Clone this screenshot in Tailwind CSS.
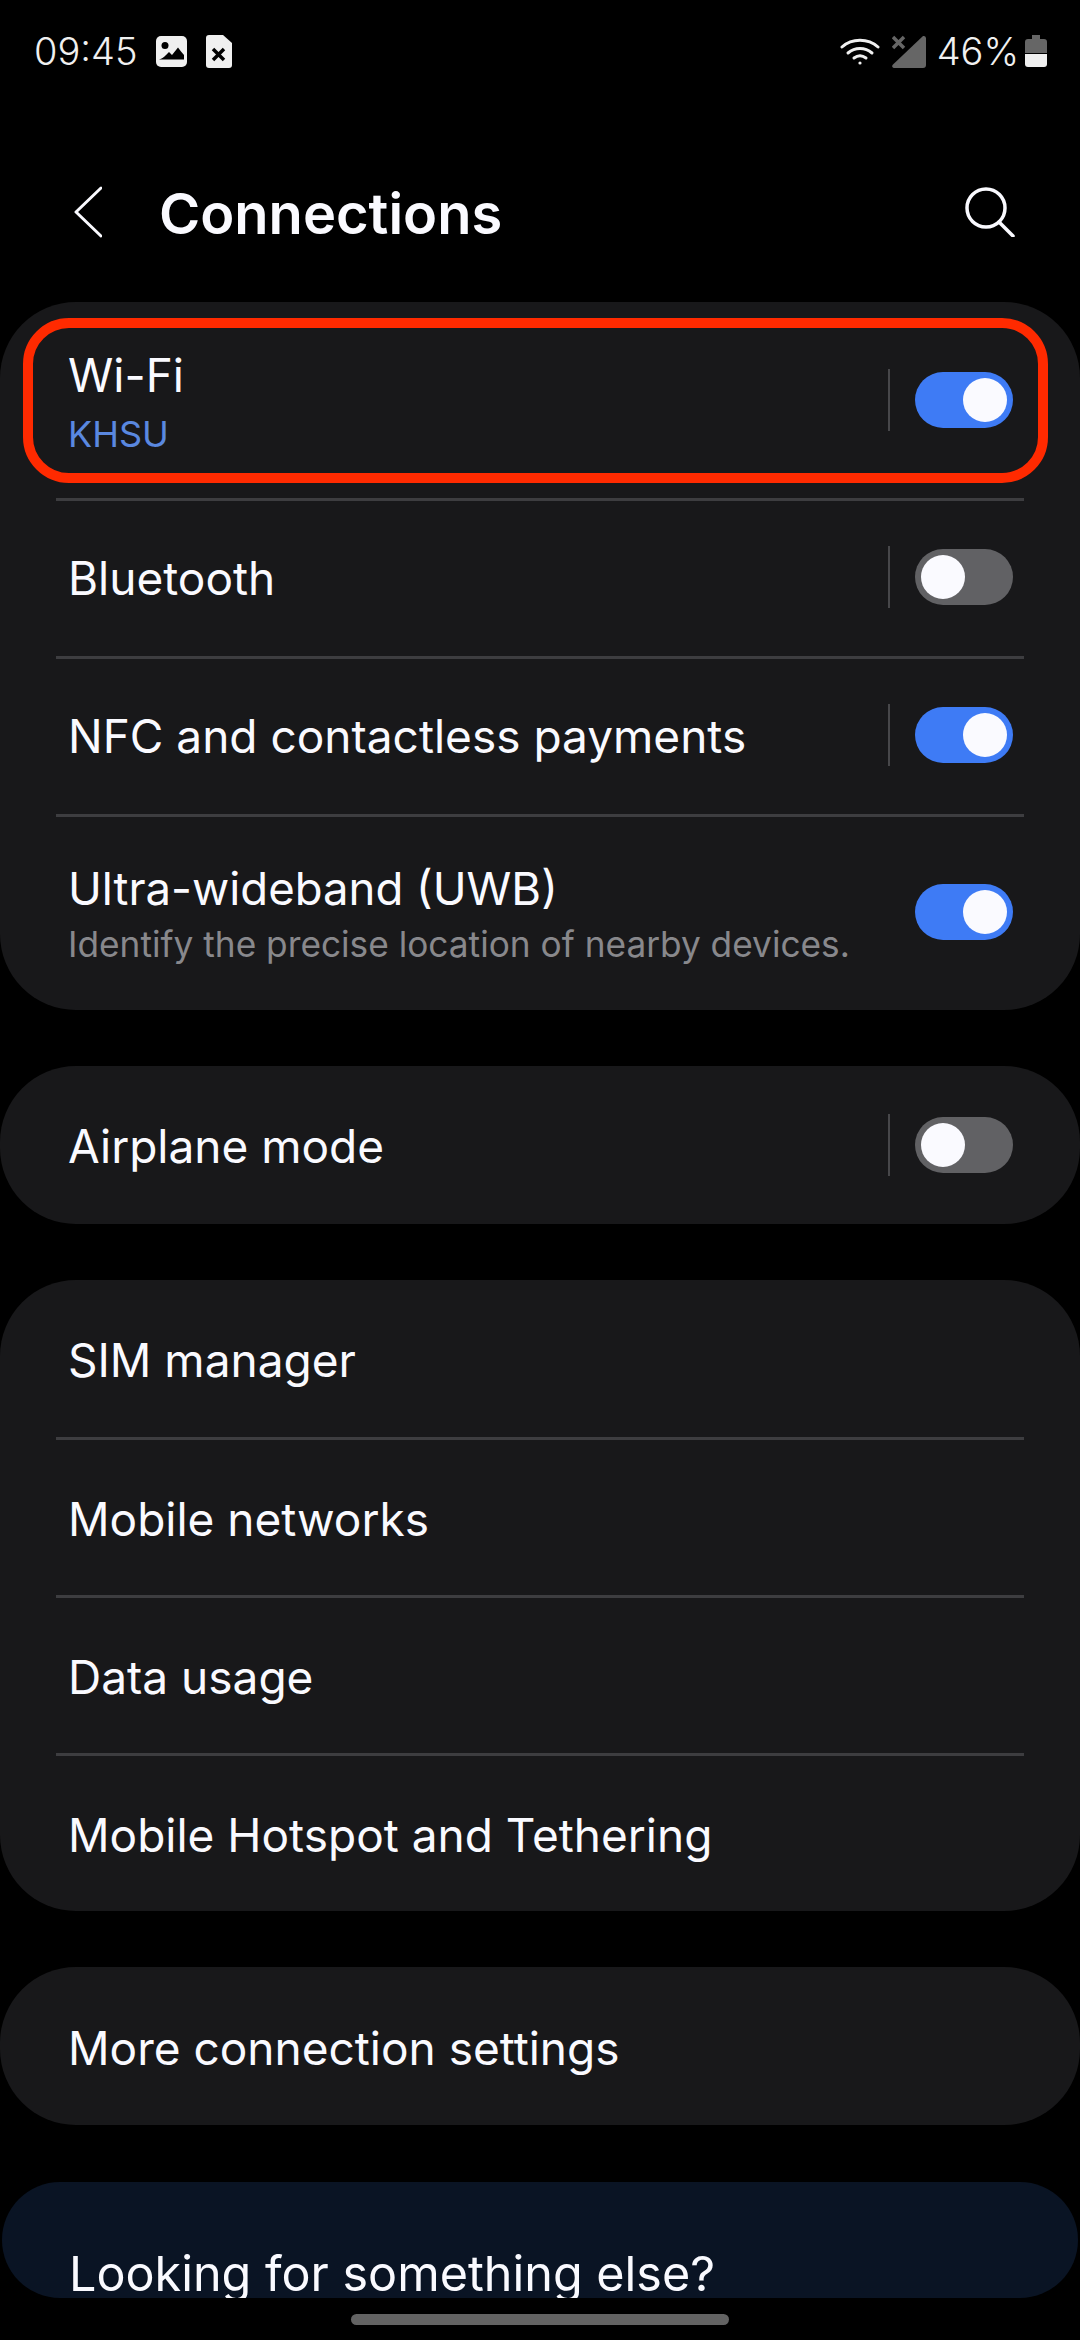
<!DOCTYPE html>
<html>
<head>
    <title>Connections</title>
    <script src="https://cdn.jsdelivr.net/npm/@tailwindcss/browser@4"></script>
</head>
<body class="bg-black">
    <div class="relative w-[1080px] h-[2340px] overflow-hidden bg-black text-[#fafaff] font-['Inter','Roboto',sans-serif]">
        <!-- status bar -->
        <div class="flex items-center h-[102px] pl-[34px] pr-[33px] text-[#f0f0f0]">
            <span class="text-[38px] leading-none font-light">09:45</span>
            <svg class="ml-[18px] w-[31px] h-[31px]" viewBox="0 0 31 31"><rect width="31" height="31" rx="5" fill="#f0f0f0"/><circle cx="9" cy="9.5" r="3.5" fill="#000"/><path d="M3 23.500c3-1 5-2.500 7-4.500l3-3 3 3 6-7.500c2 3 4 5 6 7.500v4.500z" fill="#000"/><path d="M5 27h21" stroke="#f0f0f0" stroke-width="3"/></svg>
            <svg class="ml-[19px] w-[26px] h-[33px]" viewBox="0 0 26 33"><path d="M3 0h14l9 8v22a3 3 0 0 1-3 3H3a3 3 0 0 1-3-3V3a3 3 0 0 1 3-3z" fill="#f0f0f0"/><path d="M7 14l11 11M18 14L7 25" stroke="#000" stroke-width="3.500"/></svg>
            <div class="flex-1"></div>
            <svg class="w-[40px] h-[28px]" viewBox="0 0 40 28" fill="none" stroke="#f0f0f0" stroke-width="3" stroke-linecap="round"><path d="M2 10C12 1 28 1 38 10"/><path d="M8 16c7-6 17-6 24 0"/><path d="M14 21c4-3 8-3 12 0"/><circle cx="20" cy="26" r="1.600" fill="#f0f0f0" stroke="none"/></svg>
            <svg class="ml-[12px] w-[34px] h-[33px]" viewBox="0 0 34 33"><path d="M31 1a2.500 2.500 0 0 1 3 2v27a3 3 0 0 1-3 3H3c-3 0-3.500-2-2-3.500z" fill="#666"/><path d="M1 2l11 11M12 2L1 13" stroke="#000" stroke-width="7"/><path d="M1 2l11 11M12 2L1 13" stroke="#666" stroke-width="3.500"/></svg>
            <span class="ml-[11px] text-[38px] leading-none font-light">46%</span>
            <svg class="ml-[6px] w-[22px] h-[32px]" viewBox="0 0 22 32"><path d="M7 0h8v4h4a3 3 0 0 1 3 3v11H0V7a3 3 0 0 1 3-3h4z" fill="#666"/><path d="M0 19h22v10a3 3 0 0 1-3 3H3a3 3 0 0 1-3-3z" fill="#f0f0f0"/></svg>
        </div>

        <!-- header -->
        <div class="flex items-center h-[200px] pt-[20px] pl-[74px] pr-[65px]">
            <svg class="w-[28px] h-[52px]" viewBox="0 0 28 52" fill="none" stroke="#fafaff" stroke-width="3" stroke-linecap="round" stroke-linejoin="round"><path d="M27 2L2 26l25 24"/></svg>
            <h1 class="ml-[57px] pt-[3px] text-[56px] leading-none font-semibold">Connections</h1>
            <div class="flex-1"></div>
            <svg class="w-[50px] h-[50px]" viewBox="0 0 50 50" fill="none" stroke="#fafaff" stroke-width="3.500" stroke-linecap="round"><circle cx="21" cy="21" r="19"/><path d="M34 35l14 14"/></svg>
        </div>

        <!-- wireless -->
        <div class="rounded-[76px] bg-[#18181a] text-[46px]">
            <div class="relative flex items-center h-[196px] pl-[68px] pr-[67px]">
                <div class="flex-1">
                    <div class="leading-[56px]">Wi-Fi</div>
                    <div class="mt-[8px] -mb-[3px] text-[36px] leading-[46px] text-[#5a88e0]">KHSU</div>
                </div>
                <div class="w-[2px] h-[62px] bg-[#47474a] mr-[25px]"></div>
                <div class="flex items-center justify-end w-[98px] h-[56px] pr-[6px] rounded-full bg-[#3e7bf5]"><div class="w-[44px] h-[44px] rounded-full bg-[#fafaff]"></div></div>
                <div class="absolute left-[23px] right-[32px] top-[16px] bottom-[15px] rounded-[46px] border-[10px] border-[#ff2a00]"></div>
            </div>
            <div class="mx-[56px] h-[3px] bg-[#3d3d40]"></div>
            <div class="flex items-center h-[155px] pl-[68px] pr-[67px]">
                <div class="flex-1">Bluetooth</div>
                <div class="w-[2px] h-[62px] mb-[3px] bg-[#47474a] mr-[25px]"></div>
                <div class="flex items-center justify-start w-[98px] h-[56px] mb-[3px] pl-[6px] rounded-full bg-[#616164]"><div class="w-[44px] h-[44px] rounded-full bg-[#fafaff]"></div></div>
            </div>
            <div class="mx-[56px] h-[3px] bg-[#3d3d40]"></div>
            <div class="flex items-center h-[155px] pl-[68px] pr-[67px]">
                <div class="flex-1">NFC and contactless payments</div>
                <div class="w-[2px] h-[62px] mb-[3px] bg-[#47474a] mr-[25px]"></div>
                <div class="flex items-center justify-end w-[98px] h-[56px] mb-[3px] pr-[6px] rounded-full bg-[#3e7bf5]"><div class="w-[44px] h-[44px] rounded-full bg-[#fafaff]"></div></div>
            </div>
            <div class="mx-[56px] h-[3px] bg-[#3d3d40]"></div>
            <div class="flex items-center h-[193px] pl-[68px] pr-[67px]">
                <div class="flex-1">
                    <div class="text-[45.500px] leading-[56px]">Ultra-wideband (UWB)</div>
                    <div class="mt-[5px] -mb-[2px] text-[35.250px] leading-[46px] text-[#88888c]">Identify the precise location of nearby devices.</div>
                </div>
                <div class="flex items-center justify-end w-[98px] h-[56px] mb-[3px] pr-[6px] rounded-full bg-[#3e7bf5]"><div class="w-[44px] h-[44px] rounded-full bg-[#fafaff]"></div></div>
            </div>
        </div>

        <!-- airplane -->
        <div class="mt-[56px] flex items-center h-[158px] pl-[68px] pr-[67px] rounded-[76px] bg-[#18181a] text-[46px]">
            <div class="flex-1 pt-[3px]">Airplane mode</div>
            <div class="w-[2px] h-[62px] bg-[#47474a] mr-[25px]"></div>
            <div class="flex items-center justify-start w-[98px] h-[56px] pl-[6px] rounded-full bg-[#616164]"><div class="w-[44px] h-[44px] rounded-full bg-[#fafaff]"></div></div>
        </div>

        <!-- sim and data -->
        <div class="mt-[56px] rounded-[76px] bg-[#18181a] text-[46px]">
            <div class="flex items-center h-[157px] pt-[3px] pl-[68px]">SIM manager</div>
            <div class="mx-[56px] h-[3px] bg-[#3d3d40]"></div>
            <div class="flex items-center h-[155px] pt-[3px] pl-[68px]">Mobile networks</div>
            <div class="mx-[56px] h-[3px] bg-[#3d3d40]"></div>
            <div class="flex items-center h-[155px] pt-[3px] pl-[68px]">Data usage</div>
            <div class="mx-[56px] h-[3px] bg-[#3d3d40]"></div>
            <div class="flex items-center h-[155px] pt-[3px] pl-[68px]">Mobile Hotspot and Tethering</div>
        </div>

        <!-- more -->
        <div class="mt-[56px] flex items-center h-[158px] pt-[5px] pl-[68px] rounded-[76px] bg-[#18181a] text-[46px]">More connection settings</div>

        <!-- looking for, cut off by the nav area -->
        <div class="mt-[57px] mx-[2px] h-[116px] overflow-hidden rounded-[76px] bg-[#0a1424] pl-[67px] pt-[64px] text-[48.500px] leading-[56px]">Looking for something else?</div>

        <!-- gesture pill -->
        <div class="absolute left-[351px] top-[2314px] w-[378px] h-[11px] rounded-full bg-[#636363]"></div>
    </div>
</body>
</html>
